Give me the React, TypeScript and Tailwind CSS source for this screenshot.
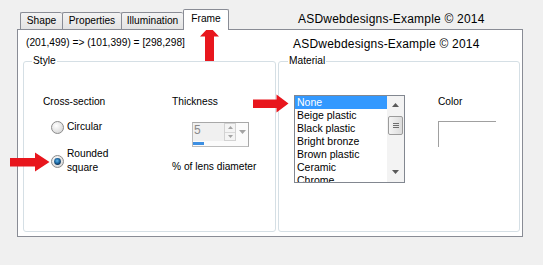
import React from "react";

const SEG = "text-[10.2px] leading-[14px]";

function Tab({ w, children }: { w: string; children: React.ReactNode }) {
  return (
    <div
      className={`${w} h-[17px] flex justify-center pt-[1px] border-l border-t border-[#898c95] rounded-t-[2px] bg-linear-to-b from-[#f3f3f3] to-[#e3e3e3] ${SEG}`}
    >
      {children}
    </div>
  );
}

function Radio({ checked, id }: { checked?: boolean; id: string }) {
  return (
    <svg width="13" height="13" viewBox="0 0 13 13" className="shrink-0">
      <defs>
        <radialGradient id={`bg-${id}`} cx="0.4" cy="0.35" r="0.75">
          <stop offset="0" stopColor="#ffffff" />
          <stop offset="1" stopColor="#d2d2d2" />
        </radialGradient>
        <radialGradient id={`dot-${id}`} cx="0.45" cy="0.4" r="0.6">
          <stop offset="0" stopColor="#63b8ec" />
          <stop offset="0.55" stopColor="#1d6aa6" />
          <stop offset="1" stopColor="#0c2f52" />
        </radialGradient>
      </defs>
      <circle cx="6.5" cy="6.5" r="6" fill={`url(#bg-${id})`} stroke="#8c8c8c" strokeWidth="1" />
      {checked && <circle cx="6.5" cy="6.5" r="3.4" fill={`url(#dot-${id})`} />}
    </svg>
  );
}

const items = ["None", "Beige plastic", "Black plastic", "Bright bronze", "Brown plastic", "Ceramic", "Chrome"];

export default function App() {
  return (
    <div className="relative w-[543px] h-[265px] overflow-hidden bg-[#f0f0f0] text-black font-['Liberation_Sans',Arial,sans-serif]">
      {/* tab strip + title */}
      <div className="flex h-[29px] items-end pl-[20px]">
        <Tab w="w-[42px]">Shape</Tab>
        <Tab w="w-[59px]">Properties</Tab>
        <Tab w="w-[62px]">Illumination</Tab>
        <div
          className={`relative z-10 mb-[-1px] h-[21px] w-[46px] flex justify-center pt-[2px] border border-b-0 border-[#898c95] rounded-t-[2px] bg-white ${SEG}`}
        >
          Frame
        </div>
        <div className="self-start mt-[12px] ml-[69px] text-[12px] leading-[14px] tracking-[0.2px]">
          ASDwebdesigns-Example © 2014
        </div>
      </div>

      {/* panel */}
      <div className="ml-[17px] w-[506px] h-[208px] border border-[#898c95] bg-white flex flex-col">
        <div className="flex h-[24px] shrink-0">
          <div className={`w-[275px] pl-[8px] pt-[6px] ${SEG}`}>(201,499) =&gt; (101,399) = [298,298]</div>
          <div className="pt-[7px] text-[12px] leading-[14px] tracking-[0.2px]">ASDwebdesigns-Example © 2014</div>
        </div>

        <div className="flex pl-[5px] gap-[2px]">
          {/* Style group */}
          <fieldset className="w-[253px] h-[178px] min-w-0 border border-[#d5dfe5] rounded-[3px]">
            <legend className={`ml-[8px] px-[1px] ${SEG}`}>Style</legend>
            <div className={`flex pl-[19px] pt-[27px] ${SEG}`}>
              <div className="w-[129px] flex flex-col">
                <div>Cross-section</div>
                <div className="mt-[11px] ml-[8px] flex h-[14px] items-center">
                  <Radio id="c" />
                  <span className="ml-[3px]">Circular</span>
                </div>
                <div className="mt-[13px] ml-[8px] flex items-center">
                  <Radio id="r" checked />
                  <span className="ml-[3px]">
                    Rounded
                    <br />
                    square
                  </span>
                </div>
              </div>
              <div className="flex flex-col">
                <div>Thickness</div>
                <div className="ml-[20px] mt-[13px] w-[57px] h-[25px] border border-[#bcbcbc] border-t-[#a8a8a8] border-r-[#a8a8a8] bg-[#fbfbfb] flex flex-col">
                  <div className="flex h-[18px]">
                    <div className="w-[31px] bg-[#f0f0f0] pl-[1px] text-[12px] leading-[14px] text-[#8a8a8a]">5</div>
                    <div className="w-[12px] flex flex-col border border-[#d2d2d2] bg-[#f4f4f4]">
                      <div className="flex-1 flex items-center justify-center border-b border-[#d8d8d8]">
                        <svg width="5" height="3" viewBox="0 0 5 3">
                          <polygon points="2.5,0 5,3 0,3" fill="#a4a4a4" />
                        </svg>
                      </div>
                      <div className="flex-1 flex items-center justify-center">
                        <svg width="5" height="3" viewBox="0 0 5 3">
                          <polygon points="0,0 5,0 2.5,3" fill="#a4a4a4" />
                        </svg>
                      </div>
                    </div>
                    <div className="flex-1 flex items-center justify-center">
                      <svg width="7" height="4" viewBox="0 0 7 4">
                        <polygon points="0,0 7,0 3.5,4" fill="#a4a4a4" />
                      </svg>
                    </div>
                  </div>
                  <div className="mt-auto mb-[1px] h-[3px] w-[11px] bg-[#3d8fe2]" />
                </div>
                <div className="mt-[13px]">% of lens diameter</div>
              </div>
            </div>
          </fieldset>

          {/* Material group */}
          <fieldset className="w-[242px] h-[178px] min-w-0 border border-[#d5dfe5] rounded-[3px]">
            <legend className={`ml-[9px] px-[1px] ${SEG}`}>Material</legend>
            <div className="flex pl-[15px] pt-[27px]">
              <div className="w-[111px] h-[88px] border border-[#828790] flex overflow-hidden">
                <div className="flex-1 min-w-0 overflow-hidden">
                  {items.map((it, i) => (
                    <div
                      key={it}
                      className={`h-[13px] pl-[2px] text-[10.5px] leading-[13px] whitespace-nowrap ${
                        i === 0 ? "bg-[#3399ff] text-white" : "text-black"
                      }`}
                    >
                      {it}
                    </div>
                  ))}
                </div>
                <div className="w-[17px] flex flex-col bg-[#f3f3f3]">
                  <div className="h-[17px] flex items-center justify-center">
                    <svg width="7" height="4" viewBox="0 0 7 4">
                      <polygon points="3.5,0 7,4 0,4" fill="#5a5a5a" />
                    </svg>
                  </div>
                  <div className="mt-[3px] mx-[1px] h-[19px] rounded-[2px] border border-[#9b9b9b] bg-linear-to-r from-[#f4f4f4] to-[#dcdcdc] flex flex-col items-center justify-center gap-[1px]">
                    <div className="w-[6px] h-px bg-[#6e6e6e]" />
                    <div className="w-[6px] h-px bg-[#6e6e6e]" />
                    <div className="w-[6px] h-px bg-[#6e6e6e]" />
                  </div>
                  <div className="flex-1" />
                  <div className="h-[17px] flex items-center justify-center pb-[3px]">
                    <svg width="7" height="4" viewBox="0 0 7 4">
                      <polygon points="0,0 7,0 3.5,4" fill="#5a5a5a" />
                    </svg>
                  </div>
                </div>
              </div>
              <div className="ml-[33px] flex flex-col">
                <div className={SEG}>Color</div>
                <div className="mt-[12px] w-[58px] h-[26px] border-t border-l border-[#a0a0a0]" />
              </div>
            </div>
          </fieldset>
        </div>
      </div>

      {/* red annotation arrows */}
      <svg className="absolute left-0 top-0 pointer-events-none" width="543" height="265" viewBox="0 0 543 265">
        <polygon
          fill="#e8161d"
          points="209.5,26.5 219,36.5 214,36.5 214,61 205,61 205,36.5 200,36.5"
        />
        <polygon
          fill="#e8161d"
          points="10,158 35,158 35,152.5 49.5,162 35,171.5 35,166.5 10,166.5"
        />
        <polygon
          fill="#e8161d"
          points="253,99.5 276.5,99.5 276.5,94.5 288.5,103.5 276.5,112.5 276.5,108 253,108"
        />
      </svg>
    </div>
  );
}
